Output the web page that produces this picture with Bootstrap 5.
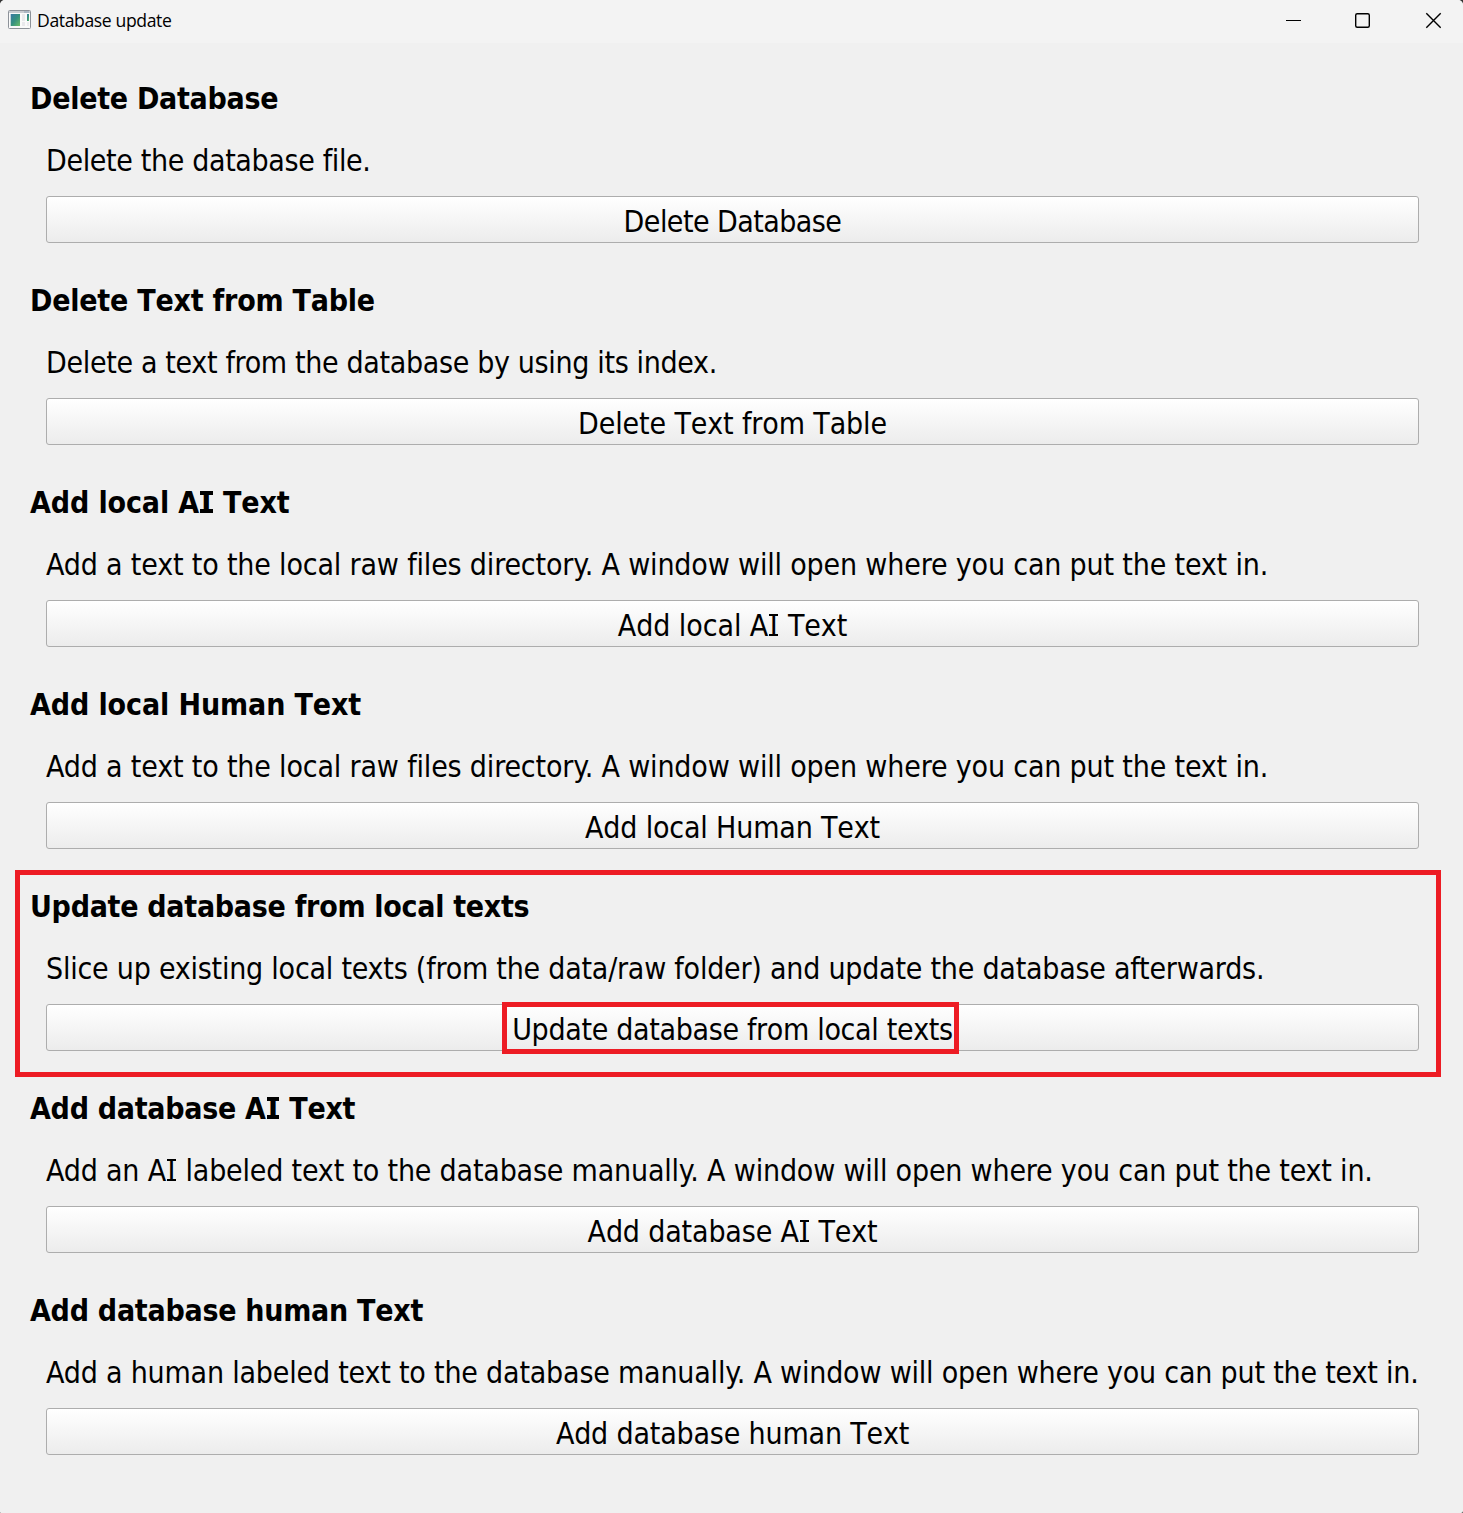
<!DOCTYPE html>
<html lang="en">
<head>
<meta charset="utf-8">
<title>Database update</title>
<link rel="stylesheet" href="https://cdn.jsdelivr.net/npm/bootstrap@5.3.0/dist/css/bootstrap.min.css">
<style>
  body { background: #333; color: #000; font-family: "DejaVu Sans Condensed", "DejaVu Sans", sans-serif; font-size: 30px; line-height: 40px; overflow: hidden; }
  .app-window { height: 1513px; background: #f0f0f0; border-radius: 5px 5px 2px 1px; overflow: hidden; white-space: nowrap; }
  .title-bar { height: 43px; background: #f3f3f3; padding: 0 0 3px 8px; }
  .window-title { font: 17.6px/40px "Open Sans", sans-serif; letter-spacing: -.38px; margin-left: 6px; }
  .window-controls svg { display: block; }
  .window-body { padding-top: 19px; }
  .action-group { height: 202px; padding: 17px 44px 21px 46px; }
  .group-title { font-size: 30px; font-weight: 700; line-height: 40px; margin: 0 0 22px -16px; }
  .group-title, .btn-action { font-kerning: none; }
  .group-text { margin: 0 0 15px; }
  .btn-action { height: 47px; padding: 4px 0 0; border: 1px solid #adadad; border-radius: 3px; background: linear-gradient(#fff, #ececec); color: #000; font-size: 30px; line-height: 40px; }
  .btn-action:hover { border-color: #888; color: #000; }
  .frame-red { border: 5px solid #ed1c24; pointer-events: none; }
  .frame-group { left: 15px; top: 0; width: 1426px; height: 207px; }
  .frame-label { left: 502px; top: 132px; width: 457px; height: 52px; }
  /* capital I with slab serifs */
  .slab-i { display: inline-block; position: relative; width: 11.2px; text-align: center; letter-spacing: 0; }
  .slab-i::before { content: ""; position: absolute; left: 1px; right: 1px; top: 8px; height: 22px; border: solid #000; border-width: 2px 0; }
  .group-title .slab-i { width: 14.5px; }
  .group-title .slab-i::before { border-width: 4px 0; }
  .ls-1 { letter-spacing: -.28px; } .ls-2 { letter-spacing: -.23px; } .ls-3 { letter-spacing: -.12px; } .ls-4 { letter-spacing: -.11px; }
  .ls-5 { letter-spacing: -.29px; } .ls-6 { letter-spacing: -.29px; } .ls-7 { letter-spacing: -.27px; }
  .lt-1 { letter-spacing: -.36px; } .lt-2 { letter-spacing: -.34px; } .lt-3 { letter-spacing: -.17px; }
  .lt-5 { letter-spacing: -.23px; } .lt-6 { letter-spacing: -.19px; } .lt-7 { letter-spacing: -.2px; }
  .lb-1 { letter-spacing: -.55px; } .lb-2 { letter-spacing: -.13px; } .lb-3 { letter-spacing: -.07px; } .lb-4 { letter-spacing: -.17px; }
  .lb-5 { letter-spacing: -.33px; } .lb-6 { letter-spacing: -.16px; } .lb-7 { letter-spacing: -.18px; }
</style>
</head>
<body>
<div class="app-window">
  <header class="title-bar d-flex align-items-center">
    <svg width="23" height="20" viewBox="0 0 23 20" aria-hidden="true">
      <defs><linearGradient id="pane" x1="0" y1="0" x2="1" y2="1"><stop offset="0" stop-color="#3b78a5"/><stop offset=".5" stop-color="#35917f"/><stop offset="1" stop-color="#6cbd68"/></linearGradient></defs>
      <rect x=".5" y=".5" width="22" height="18" rx="1" fill="#fafafa" stroke="#8d9299"/>
      <path d="M1 2h21" stroke="#c9ccd1" stroke-width="2"/><path d="M16 2h5" stroke="#8fa3b8"/>
      <rect x="2.7" y="4" width="9.3" height="12" fill="url(#pane)"/>
      <rect x="14" y="4" width="3" height="7" fill="#e9e9ec"/><rect x="14" y="12" width="3" height="4" fill="#e9e9ec"/>
      <rect x="19" y="4" width="2" height="7" fill="url(#pane)"/><rect x="19" y="12" width="2" height="4" fill="#ececef"/>
    </svg>
    <span class="window-title">Database update</span>
    <div class="window-controls ms-auto">
      <svg width="178" height="20" viewBox="1285 10 178 20" fill="none" stroke="#000" aria-label="Window controls">
        <path d="M1286 20.5h15" stroke-width="1.1"/>
        <rect x="1355.7" y="13.7" width="13.6" height="13.6" rx="1.5" stroke-width="1.4"/>
        <path d="M1426.3 13.3l14.4 14.4M1440.7 13.3l-14.4 14.4" stroke-width="1.4"/>
      </svg>
    </div>
  </header>
  <main class="window-body">
    <section class="action-group">
      <h2 class="group-title ls-1">Delete Database</h2>
      <p class="group-text lt-1">Delete the database file.</p>
      <button class="btn btn-action d-block w-100 lb-1">Delete Database</button>
    </section>
    <section class="action-group">
      <h2 class="group-title ls-2">Delete Text from Table</h2>
      <p class="group-text lt-2">Delete a text from the database by using its index.</p>
      <button class="btn btn-action d-block w-100 lb-2">Delete Text from Table</button>
    </section>
    <section class="action-group">
      <h2 class="group-title ls-3">Add local A<span class="slab-i">I</span> Text</h2>
      <p class="group-text lt-3">Add a text to the local raw files directory. A window will open where you can put the text in.</p>
      <button class="btn btn-action d-block w-100 lb-3">Add local A<span class="slab-i">I</span> Text</button>
    </section>
    <section class="action-group">
      <h2 class="group-title ls-4">Add local Human Text</h2>
      <p class="group-text lt-3">Add a text to the local raw files directory. A window will open where you can put the text in.</p>
      <button class="btn btn-action d-block w-100 lb-4">Add local Human Text</button>
    </section>
    <section class="action-group position-relative">
      <h2 class="group-title ls-5">Update database from local texts</h2>
      <p class="group-text lt-5">Slice up existing local texts (from the data/raw folder) and update the database afterwards.</p>
      <button class="btn btn-action d-block w-100 lb-5">Update database from local texts</button>
      <div class="frame-red frame-group position-absolute"></div>
      <div class="frame-red frame-label position-absolute"></div>
    </section>
    <section class="action-group">
      <h2 class="group-title ls-6">Add database A<span class="slab-i">I</span> Text</h2>
      <p class="group-text lt-6">Add an A<span class="slab-i">I</span> labeled text to the database manually. A window will open where you can put the text in.</p>
      <button class="btn btn-action d-block w-100 lb-6">Add database A<span class="slab-i">I</span> Text</button>
    </section>
    <section class="action-group">
      <h2 class="group-title ls-7">Add database human Text</h2>
      <p class="group-text lt-7">Add a human labeled text to the database manually. A window will open where you can put the text in.</p>
      <button class="btn btn-action d-block w-100 lb-7">Add database human Text</button>
    </section>
  </main>
</div>
<script src="https://cdn.jsdelivr.net/npm/bootstrap@5.3.0/dist/js/bootstrap.bundle.min.js"></script>
</body>
</html>
